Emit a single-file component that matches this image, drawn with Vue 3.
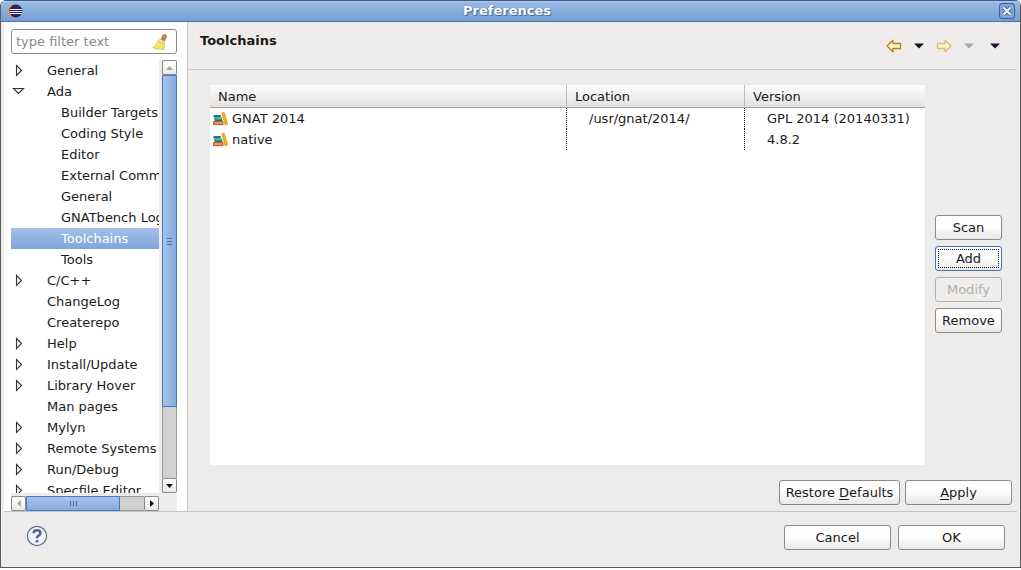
<script setup>
import { ref } from 'vue'

const filter = ref('')
const selected = ref('Toolchains')

const tree = [
  { label: 'General', level: 0, arrow: 'closed' },
  { label: 'Ada', level: 0, arrow: 'open' },
  { label: 'Builder Targets', level: 1 },
  { label: 'Coding Style', level: 1 },
  { label: 'Editor', level: 1 },
  { label: 'External Commands', level: 1 },
  { label: 'General', level: 1 },
  { label: 'GNATbench Logging', level: 1 },
  { label: 'Toolchains', level: 1 },
  { label: 'Tools', level: 1 },
  { label: 'C/C++', level: 0, arrow: 'closed' },
  { label: 'ChangeLog', level: 0 },
  { label: 'Createrepo', level: 0 },
  { label: 'Help', level: 0, arrow: 'closed' },
  { label: 'Install/Update', level: 0, arrow: 'closed' },
  { label: 'Library Hover', level: 0, arrow: 'closed' },
  { label: 'Man pages', level: 0 },
  { label: 'Mylyn', level: 0, arrow: 'closed' },
  { label: 'Remote Systems', level: 0, arrow: 'closed' },
  { label: 'Run/Debug', level: 0, arrow: 'closed' },
  { label: 'Specfile Editor', level: 0, arrow: 'closed' },
]

const toolchains = [
  { name: 'GNAT 2014', location: '/usr/gnat/2014/', version: 'GPL 2014 (20140331)' },
  { name: 'native', location: '', version: '4.8.2' },
]
</script>

<template>
  <div class="window">
    <header class="titlebar">
      <svg class="app-icon" width="16" height="16" viewBox="0 0 16 16" aria-hidden="true">
        <circle cx="7.500" cy="8" r="6.800" fill="#f09a33" />
        <circle cx="8.800" cy="8" r="6.500" fill="#2b2459" />
        <path d="M3 6.500h11.800M2.500 8.500h12.700M3 10.500h11.800" stroke="#efeefa" stroke-width="1" />
      </svg>
      <h1>Preferences</h1>
      <button class="close" aria-label="Close">
        <svg width="16" height="16" viewBox="0 0 16 16">
          <rect x="0.500" y="0.500" width="15" height="15" rx="2.500" fill="#81a7d9" stroke="#385f96" />
          <path d="M4.500 4.500L11.500 11.500M11.500 4.500L4.500 11.500" stroke="#3f659c" stroke-width="4" />
          <path d="M4.500 4.500L11.500 11.500M11.500 4.500L4.500 11.500" stroke="#eef4fc" stroke-width="2.200" />
        </svg>
      </button>
    </header>

    <div class="body">
      <aside class="side">
        <div class="search">
          <input v-model="filter" type="text" placeholder="type filter text" aria-label="Filter preferences" />
          <button class="clear" aria-label="Clear filter">
            <svg width="16" height="16" viewBox="0 0 16 16">
              <path d="M9 5.500L11 1Q12.500 -0.200 14 1Q14.800 2.200 14 4L12 7.500Z" fill="#b97b32" stroke="#9a6420" stroke-width="0.600" />
              <path d="M12.500 1.800L11.700 3.500" stroke="#f0cf92" />
              <path d="M7.500 4.800L13 7.700L12.300 10L6.400 7Z" fill="#f1ecd8" stroke="#c4b060" stroke-width="0.600" />
              <path d="M6.200 6.800L12.500 9.800Q12.800 13 11.500 15.500L6 15.300L0.500 13.500Q4.500 11.500 6.200 6.800Z" fill="#f7e05a" stroke="#e2c33c" stroke-width="0.800" />
              <path d="M7.500 9L4.500 13.500M10 10.500L9 15" stroke="#fff6b0" stroke-width="0.800" />
            </svg>
          </button>
        </div>

        <div class="tree-area">
          <ul class="tree" role="tree" aria-label="Preference pages">
            <li
              v-for="(item, i) in tree"
              :key="i"
              role="treeitem"
              :aria-selected="item.label === selected"
              :class="['row', { child: item.level, selected: item.label === selected }]"
              @click="selected = item.label"
            >
              <span class="twist">
                <svg v-if="item.arrow === 'closed'" width="14" height="14" viewBox="0 0 14 14">
                  <path d="M5.500 1.500L10.500 6.500L5.500 11.500Z" fill="#fff" stroke="#333" stroke-width="1.100" />
                </svg>
                <svg v-else-if="item.arrow === 'open'" width="14" height="14" viewBox="0 0 14 14">
                  <path d="M2.500 3.500H12.500L7.500 8.500Z" fill="#fff" stroke="#333" stroke-width="1.100" />
                </svg>
              </span>
              <span class="label">{{ item.label }}</span>
            </li>
          </ul>

          <div class="scroll vertical">
            <button class="step off" aria-label="Scroll up">
              <svg width="7" height="4" viewBox="0 0 7 4"><path d="M0 4L3.500 0L7 4Z" /></svg>
            </button>
            <div class="track">
              <div class="thumb"><span class="grip"></span></div>
            </div>
            <button class="step" aria-label="Scroll down">
              <svg width="7" height="4" viewBox="0 0 7 4"><path d="M0 0H7L3.500 4Z" /></svg>
            </button>
          </div>

          <div class="scroll horizontal">
            <button class="step off" aria-label="Scroll left">
              <svg width="4" height="7" viewBox="0 0 4 7"><path d="M4 0V7L0 3.500Z" /></svg>
            </button>
            <div class="track">
              <div class="thumb"><span class="grip"></span></div>
            </div>
            <button class="step" aria-label="Scroll right">
              <svg width="4" height="7" viewBox="0 0 4 7"><path d="M0 0V7L4 3.500Z" /></svg>
            </button>
          </div>
        </div>
      </aside>

      <main class="page">
        <div class="page-head">
          <h2>Toolchains</h2>
          <nav class="history" aria-label="History">
            <button aria-label="Back">
              <svg width="16" height="14" viewBox="0 0 16 14">
                <path d="M1 7L7 1.300V4.500H14.500V9.500H7V12.700Z" fill="#fff6cf" stroke="#bd7f0c" stroke-width="1.300" stroke-linejoin="round" />
              </svg>
            </button>
            <button aria-label="Back history">
              <svg width="10" height="6" viewBox="0 0 10 6"><path d="M0 0.500H10L5 5.500Z" fill="#151515" /></svg>
            </button>
            <button aria-label="Forward">
              <svg width="16" height="14" viewBox="0 0 16 14">
                <path d="M15 7L9 1.300V4.500H1.500V9.500H9V12.700Z" fill="#fcf3d6" stroke="#e0b96f" stroke-width="1.300" stroke-linejoin="round" />
              </svg>
            </button>
            <button aria-label="Forward history">
              <svg width="10" height="6" viewBox="0 0 10 6"><path d="M0 0.500H10L5 5.500Z" fill="#aaa8a6" /></svg>
            </button>
            <button class="menu" aria-label="View menu">
              <svg width="10" height="6" viewBox="0 0 10 6"><path d="M0 0.500H10L5 5.500Z" fill="#1d1138" /></svg>
            </button>
          </nav>
        </div>

        <div class="content">
          <div class="table-box">
            <table>
              <colgroup>
                <col class="col-name" />
                <col class="col-location" />
                <col />
              </colgroup>
              <thead>
                <tr>
                  <th>Name</th>
                  <th>Location</th>
                  <th>Version</th>
                </tr>
              </thead>
              <tbody>
                <tr v-for="t in toolchains" :key="t.name">
                  <td>
                    <span class="name">
                      <svg width="16" height="14" viewBox="0 0 16 14" aria-hidden="true">
                        <path d="M1 4L2.500 3H9L8.500 5H2Z" fill="#2476bd" />
                        <path d="M1.500 5H8.500" stroke="#17456e" stroke-width="0.800" />
                        <path d="M3 5.500H10V8.500H3L2 7Z" fill="#22986a" />
                        <path d="M4 6.700H9.500" stroke="#6fcf9c" stroke-width="0.700" />
                        <path d="M2.500 8.500H10.500" stroke="#135f40" stroke-width="0.800" />
                        <path d="M1.500 9.500H11V12.700H1.500Z" fill="#dd804a" stroke="#b4532a" stroke-width="0.900" />
                        <path d="M3 11H10" stroke="#f0a878" />
                        <path d="M9.800 1L12.200 0.500L15.600 12L13.200 12.800Z" fill="#fbb518" stroke="#d58b0c" stroke-width="0.800" />
                      </svg>
                      {{ t.name }}
                    </span>
                  </td>
                  <td>{{ t.location }}</td>
                  <td>{{ t.version }}</td>
                </tr>
              </tbody>
            </table>
          </div>

          <div class="actions">
            <button class="btn">Scan</button>
            <button class="btn focus">Add</button>
            <button class="btn" disabled>Modify</button>
            <button class="btn">Remove</button>
          </div>
        </div>

        <div class="page-foot">
          <button class="btn restore">Restore <u>D</u>efaults</button>
          <button class="btn wide"><u>A</u>pply</button>
        </div>
      </main>
    </div>

    <footer class="footer">
      <button class="help" aria-label="Help">
        <svg width="22" height="22" viewBox="0 0 22 22">
          <circle cx="11" cy="11" r="9.600" fill="#f1f3f6" stroke="#5c7094" stroke-width="1.200" />
          <path d="M7.600 8.300Q7.600 5.200 11 5.200Q14.400 5.200 14.400 7.900Q14.400 9.500 12.600 10.600Q11 11.500 11 13.300" fill="none" stroke="#4f668f" stroke-width="2.500" />
          <rect x="9.700" y="15" width="2.600" height="2.400" fill="#4f668f" />
        </svg>
      </button>
      <div class="dialog-buttons">
        <button class="btn wide">Cancel</button>
        <button class="btn wide">OK</button>
      </div>
    </footer>
  </div>
</template>

<style>
body {
  margin: 0;
  background: #fff;
}
</style>

<style scoped>
* {
  box-sizing: border-box;
}

.window {
  display: flex;
  flex-direction: column;
  height: calc(100vh - 2px);
  min-height: 400px;
  border: 1px solid #5d5c5b;
  border-top: 0;
  border-radius: 6px 6px 0 0;
  background: #edeceb;
  color: #1a1a1a;
  font-family: "DejaVu Sans", sans-serif;
  font-size: 13px;
  line-height: 21px;
  overflow: hidden;
}

button {
  margin: 0;
  padding: 0;
  border: 0;
  background: none;
  color: inherit;
  font: inherit;
}

svg {
  display: block;
}

.titlebar {
  display: grid;
  grid-template-columns: 16px 1fr 16px;
  align-items: center;
  flex: none;
  height: 22px;
  padding: 0 5px 0 6px;
  border-top: 1px solid #3c5b87;
  border-bottom: 1px solid #4a74ae;
  background: linear-gradient(#b0caee 0, #97b8e3 2px, #769fd2 100%);
}

h1 {
  margin: 0;
  padding-right: 8px;
  color: #fff;
  font-size: 13px;
  line-height: 20px;
  text-align: center;
  text-shadow: 1px 1px 1px #3f659c, 0 0 1px #3f659c;
}

.body {
  display: flex;
  flex: 1;
  min-height: 0;
  margin: 0 3px;
}

.side {
  display: flex;
  flex-direction: column;
  flex: none;
  width: 184px;
  padding: 7px 10px 0 7px;
  border-right: 1px solid #cfcdcb;
  background: #fff;
}

.search {
  display: flex;
  align-items: center;
  flex: none;
  height: 25px;
  padding: 0 8px 0 4px;
  border: 1px solid #8d8b89;
  border-radius: 3px;
  background: #fff;
}

.search input {
  flex: 1;
  min-width: 0;
  padding: 0;
  border: 0;
  outline: 0;
  background: none;
  color: #1a1a1a;
  font: inherit;
}

.search input::placeholder {
  color: #8b8989;
  opacity: 1;
}

.tree-area {
  display: grid;
  grid-template-columns: 1fr 15px;
  grid-template-rows: 1fr 15px;
  gap: 3px;
  flex: 1;
  min-height: 0;
  margin-top: 6px;
  background: #edeceb;
}

.tree {
  min-height: 0;
  margin: 0;
  padding: 0;
  overflow: hidden;
  background: #fff;
  list-style: none;
}

.row {
  display: flex;
  align-items: center;
  height: 21px;
  white-space: nowrap;
}

.twist {
  flex: none;
  width: 36px;
}

.child .twist {
  width: 50px;
}

.selected {
  background: linear-gradient(#a3c0e8, #7fa5d8);
  color: #fff;
}

.scroll {
  display: flex;
  background: #d3d1cf;
}

.vertical {
  flex-direction: column;
}

.step {
  display: flex;
  align-items: center;
  justify-content: center;
  flex: none;
  width: 15px;
  height: 15px;
  border: 1px solid #8d8b89;
  border-radius: 2px;
  background: linear-gradient(#fff, #ebeae9);
}

.step path {
  fill: #111;
}

.step.off path {
  fill: #aaa8a6;
}

.track {
  display: flex;
  flex: 1;
  min-height: 0;
  border: 0 solid #9a9896;
}

.vertical .track {
  flex-direction: column;
  border-width: 0 1px;
}

.horizontal .track {
  border-width: 1px 0;
}

.thumb {
  display: flex;
  align-items: center;
  justify-content: center;
  border: 1px solid #4a79bd;
}

.vertical .thumb {
  height: 82.500%;
  margin: 0 -1px;
  background: linear-gradient(90deg, #a5c3ec, #86abdd);
}

.horizontal .thumb {
  width: 80%;
  margin: -1px 0;
  background: linear-gradient(#a5c3ec, #86abdd);
}

.vertical .grip {
  width: 5px;
  height: 7px;
  background: repeating-linear-gradient(#4b6f9f 0 1px, transparent 1px 3px);
}

.horizontal .grip {
  width: 7px;
  height: 5px;
  background: repeating-linear-gradient(90deg, #4b6f9f 0 1px, transparent 1px 3px);
}

.page {
  display: flex;
  flex-direction: column;
  flex: 1;
  min-width: 0;
}

.page-head {
  display: flex;
  justify-content: space-between;
  flex: none;
  height: 48px;
  padding: 8px 17px 0 12px;
  border-bottom: 1px solid #cbc9c7;
}

h2 {
  margin: 0;
  font-size: 13px;
  line-height: 21px;
}

.history {
  display: flex;
  align-items: center;
  gap: 12px;
  height: 32px;
}

.history .menu {
  margin-left: 4px;
}

.content {
  display: flex;
  flex: 1;
  gap: 10px;
  min-height: 0;
  padding: 15px 15px 0 22px;
}

.table-box {
  flex: 1;
  min-width: 0;
  background: #fff;
}

table {
  width: 100%;
  border-spacing: 0;
  table-layout: fixed;
}

.col-name {
  width: 357px;
}

.col-location {
  width: 178px;
}

th {
  height: 23px;
  padding: 1px 8px 0;
  border-right: 1px solid #bebcba;
  border-bottom: 1px solid #a5a3a1;
  background: linear-gradient(#fdfdfd, #e3e2e0);
  font-weight: 400;
  text-align: left;
  line-height: 21px;
}

th:last-child {
  border-right: 0;
}

td {
  height: 21px;
  padding: 0 0 0 22px;
  border-right: 1px dotted #111;
  white-space: nowrap;
}

td:first-child {
  padding-left: 2px;
}

td:last-child {
  border-right: 0;
}

.name {
  display: flex;
  align-items: center;
  gap: 4px;
}

.actions {
  display: flex;
  flex-direction: column;
  justify-content: center;
  gap: 6px;
  flex: none;
  width: 67px;
  padding-bottom: 2px;
}

.btn {
  height: 25px;
  border: 1px solid #8d8b89;
  border-radius: 3px;
  background: linear-gradient(#fff 0, #fcfcfc 50%, #e9e8e7 100%);
  line-height: 23px;
  text-align: center;
}

.btn:disabled {
  border-color: #b2b0ae;
  background: #efeeed;
  color: #b0aeac;
}

.btn.focus {
  border-color: #4470b0;
  outline: 1px dotted #111;
  outline-offset: -4px;
}

.page-foot {
  display: flex;
  justify-content: flex-end;
  gap: 5px;
  flex: none;
  padding: 15px 5px 6px;
}

.restore {
  width: 121px;
}

.wide {
  width: 107px;
}

u {
  text-underline-offset: 2px;
}

.footer {
  display: flex;
  justify-content: space-between;
  flex: none;
  height: 56px;
  margin: 0 3px;
  padding: 13px 12px 0 22px;
  border-top: 1px solid #c6c4c2;
}

.help {
  height: 22px;
}

.dialog-buttons {
  display: flex;
  gap: 7px;
}
</style>
